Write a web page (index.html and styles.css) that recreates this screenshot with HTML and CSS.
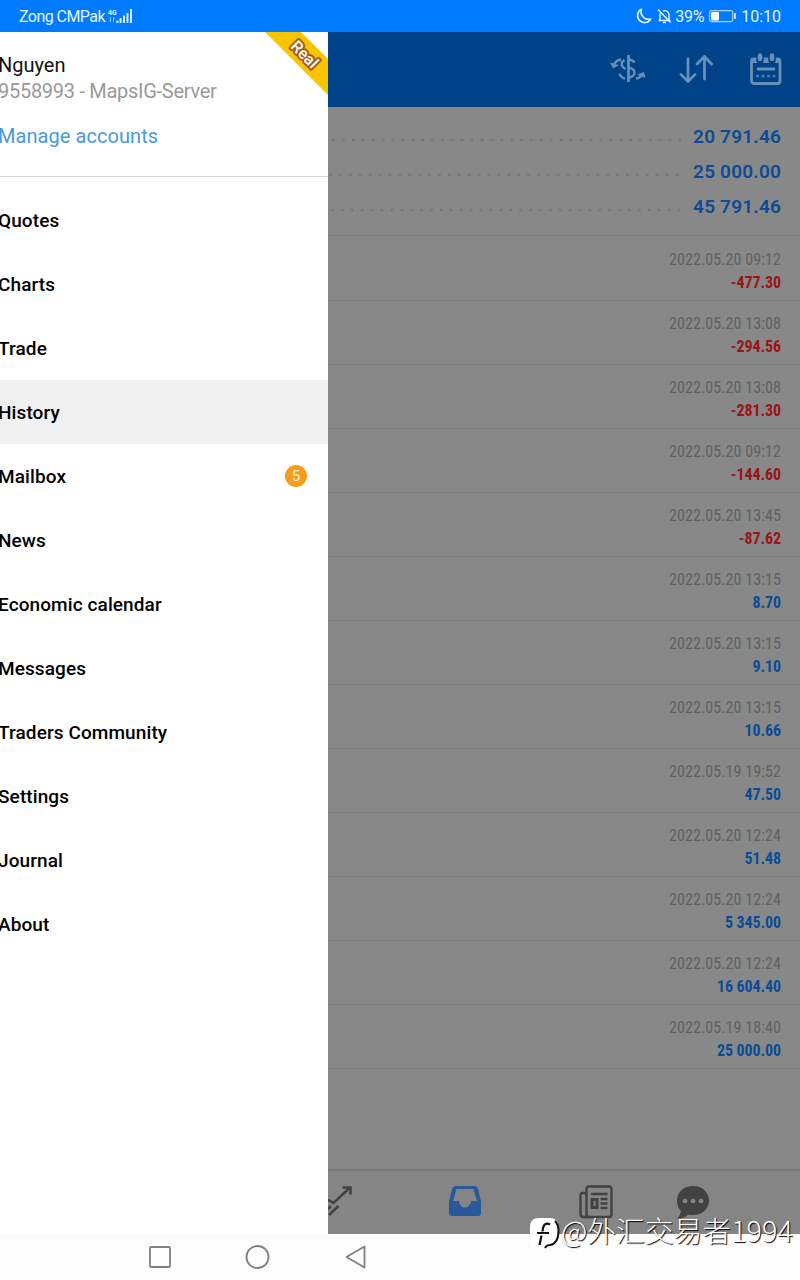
FILE: index.html
```
<!DOCTYPE html>
<html lang="en">
<head>
    <meta charset="UTF-8">
    <meta name="viewport" content="width=device-width, initial-scale=1.0">
    <title>History</title>
    <link rel="stylesheet" href="styles.css">
</head>
<body>
    <div class="status-bar">
        <span class="carrier">Zong CMPak</span>
        <svg class="signal" width="25" height="16" viewBox="0 0 25 16">
            <text x="0" y="6.500" class="network" textLength="8.500" lengthAdjust="spacingAndGlyphs">4G</text>
            <path d="M2.500 9v5M1.500 12.500L2.500 14M5.500 14V9.500M6.600 11L5.500 9.500" fill="none" stroke="#8fc6ff" stroke-width="1"/>
            <path d="M8.300 12.500h2.200v2.500h-2.200zM11.600 10h2v5h-2zM15 7.500h2v7.500h-2zM18.500 5h2v10h-2zM22 1h2v14h-2z" fill="#d9f0ff"/>
        </svg>
        <div class="status-right">
            <svg width="16" height="16" viewBox="0 0 16 16" fill="none" stroke="#e3f6ff" stroke-width="1.600">
                <path d="M5.500 1.300A7 7 0 1 0 14.700 11 7.500 7.500 0 0 1 5.500 1.300z" stroke-linejoin="round"/>
            </svg>
            <svg class="bell" width="15" height="16" viewBox="0 0 15 16" fill="none" stroke="#e3f6ff" stroke-width="1.400">
                <path d="M1.500 12.500h12M3 12V7c0-1 .3-2 1-2.700M6 3c3-1.200 6 .8 6 4v5M6 14.500h3M1 1.500l12.500 13"/>
            </svg>
            <span class="percent">39%</span>
            <svg class="battery" width="27" height="14" viewBox="0 0 27 14">
                <rect x="0.600" y="1.600" width="23" height="11" rx="2" fill="none" stroke="#a9d6ff" stroke-width="1.100"/>
                <rect x="2" y="3" width="8" height="8.500" rx="1" fill="#fff"/>
                <path d="M25.900 4v6" stroke="#e3f6ff" stroke-width="1.600"/>
            </svg>
            <span>10:10</span>
        </div>
    </div>

    <div class="screen">
        <div class="drawer">
            <div class="account">
                <div class="account-name">Nguyen</div>
                <div class="account-server">9558993 - MapsIG-Server</div>
                <div class="account-manage">Manage accounts</div>
                <svg class="ribbon" width="64" height="64" viewBox="0 0 64 64">
                    <path d="M1 0H37L64 27V63z" fill="#f6c400"/>
                    <text x="41" y="28" transform="rotate(45 41 22)" class="ribbon-text">Real</text>
                </svg>
            </div>
            <div class="menu">
                <div class="menu-item">Quotes</div>
                <div class="menu-item">Charts</div>
                <div class="menu-item">Trade</div>
                <div class="menu-item active">History</div>
                <div class="menu-item">Mailbox <span class="badge">5</span></div>
                <div class="menu-item">News</div>
                <div class="menu-item">Economic calendar</div>
                <div class="menu-item">Messages</div>
                <div class="menu-item">Traders Community</div>
                <div class="menu-item">Settings</div>
                <div class="menu-item">Journal</div>
                <div class="menu-item">About</div>
            </div>
        </div>

        <div class="content">
            <div class="toolbar">
                <svg width="36" height="32" viewBox="0 0 36 32" fill="none" stroke="#668fb9" stroke-width="2.400">
                    <path d="M18.500 2v27" stroke-width="2.800"/>
                    <path d="M24.500 9.500c-1.500-2-3.500-2.800-6-3M18.500 14.500c4 .8 6 2.500 6 5s-2 4.500-6 5"/>
                    <path d="M14.500 7c-4 2.500-4 6.500 1 9M9.500 20.500c.8 2.800 2.500 4.500 5.500 5"/>
                    <path d="M11 6.500c-3 .3-5.500 2-7 5M26 25.500c3.500-.3 5.500-2 6.500-5"/>
                    <path d="M0 9.500l3 6 6-3.500zM27 21.500l7-2.500 1.500 6z" fill="#668fb9" stroke="none"/>
                </svg>
                <svg class="sort" width="34" height="30" viewBox="0 0 34 30" fill="none" stroke="#668fb9" stroke-width="2.800" stroke-linecap="round" stroke-linejoin="round">
                    <path d="M9 5v22M2 20.500l7 7 7-7M25.500 25V2.500M18 10l7.500-7.500L32.500 10"/>
                </svg>
                <svg width="32" height="32" viewBox="0 0 32 32">
                    <rect x="1.500" y="6" width="28.500" height="24.500" rx="2.500" fill="none" stroke="#668fb9" stroke-width="2.800"/>
                    <path d="M1 5h29v5H1z" fill="#668fb9"/>
                    <path d="M10 3v4M22 3v4" stroke="#004287" stroke-width="7.500" stroke-linecap="round"/>
                    <path d="M10 2.500v3.500M22 2.500v3.500" stroke="#668fb9" stroke-width="4.600" stroke-linecap="round"/>
                    <path d="M8 16h16" stroke="#668fb9" stroke-width="2.800" stroke-linecap="round"/>
                    <path d="M7.500 23h18" stroke="#427fb8" stroke-width="3.200" stroke-linecap="round" stroke-dasharray="0 5.500"/>
                </svg>
            </div>

            <div class="summary">
                <div class="summary-row"><svg class="dots" width="354" height="4"><path d="M352 2H0" class="dot-line"/></svg><span>20 791.46</span></div>
                <div class="summary-row"><svg class="dots" width="354" height="4"><path d="M349 2H0" class="dot-line"/></svg><span>25 000.00</span></div>
                <div class="summary-row"><svg class="dots" width="354" height="4"><path d="M351 2H0" class="dot-line"/></svg><span>45 791.46</span></div>
            </div>

            <div class="deals" id="deals"></div>

            <div class="tabs">
                <svg class="tab-trade" width="26" height="32" viewBox="0 0 26 32" fill="none" stroke="#424242" stroke-width="2.600">
                    <path d="M0 15l5.500 3L21.500 3M14.500 2.500h8v7M0 24l3-3M1 30l9.500-9"/>
                </svg>
                <svg class="tab-history" width="34" height="32" viewBox="0 0 34 32">
                    <path d="M8 1h18c2 0 3.500 1 4 3l3 12v12c0 2-1 3-3 3H4c-2 0-3-1-3-3V16L4 4c.5-2 2-3 4-3zM8.500 4L5 16h6c.5 4 3 6.500 6 6.500s5.500-2.500 6-6.500h6L25.500 4z" fill="#27599b" fill-rule="evenodd"/>
                </svg>
                <svg class="tab-news" width="34" height="34" viewBox="0 0 34 34" fill="none" stroke="#424242" stroke-width="2.400">
                    <rect x="7.500" y="1.500" width="25" height="30.500" rx="2.500"/>
                    <path d="M7 8H4C2 8 1.500 9 1.500 10.500V29c0 2 1 3 3 3h6M12 9h16.500M21.500 14h7M21.500 18.500h7M21.500 23h7"/>
                    <rect x="13" y="14.500" width="5" height="8" stroke-width="3"/>
                </svg>
                <svg class="tab-chat" width="34" height="34" viewBox="0 0 34 34">
                    <path d="M17 1c9 0 16 6 16 14.500S26 30 17 30c-1.500 0-3 0-4.500-.5C10 32 6 33.500 1 33.500c2-2 3.500-4.500 4-7.500-3-2.500-4-6.500-4-10.500C1 7 8 1 17 1z" fill="#424242"/>
                    <path d="M9 16h.1M17 16h.1M25 16h.1" stroke="#858585" stroke-width="4.600" stroke-linecap="round"/>
                </svg>
            </div>
        </div>
    </div>

    <div class="nav-bar">
        <svg width="24" height="24" viewBox="0 0 24 24"><rect x="2" y="2" width="20" height="20" rx="1" fill="none" stroke="#808080" stroke-width="1.800"/></svg>
        <svg width="26" height="26" viewBox="0 0 26 26"><circle cx="12.500" cy="13" r="11" fill="none" stroke="#808080" stroke-width="1.800"/></svg>
        <svg width="24" height="26" viewBox="0 0 24 26"><path d="M20.500 2.500v21L2.500 13z" fill="none" stroke="#808080" stroke-width="1.800" stroke-linejoin="round"/></svg>
    </div>

    <div class="watermark">
        <svg width="32" height="34" viewBox="0 0 32 34">
            <path d="M9 0h11c5 0 8 3 8 8v8c0 8-4 12-11 12H0V9c0-6 3-9 9-9z" fill="#fff"/>
            <path d="M20 6.500c-5-2.500-7 1-7.500 7M7 15h12M11.500 17.500L9.500 27" fill="none" stroke="#111" stroke-width="2.200"/>
            <path d="M25 3c3 3 3.500 6 3.500 10 0 9-3 13-8.500 14-3 0-4 1-5 3" fill="none" stroke="#111" stroke-width="2"/>
        </svg>
        <span>@外汇交易者1994</span>
    </div>

    <script>
        const deals = [
            ["2022.05.20 09:12", "-477.30"],
            ["2022.05.20 13:08", "-294.56"],
            ["2022.05.20 13:08", "-281.30"],
            ["2022.05.20 09:12", "-144.60"],
            ["2022.05.20 13:45", "-87.62"],
            ["2022.05.20 13:15", "8.70"],
            ["2022.05.20 13:15", "9.10"],
            ["2022.05.20 13:15", "10.66"],
            ["2022.05.19 19:52", "47.50"],
            ["2022.05.20 12:24", "51.48"],
            ["2022.05.20 12:24", "5 345.00"],
            ["2022.05.20 12:24", "16 604.40"],
            ["2022.05.19 18:40", "25 000.00"]
        ];

        const list = document.getElementById("deals");
        deals.forEach(function(deal) {
            const row = document.createElement("div");
            row.className = "deal";
            const time = document.createElement("div");
            time.className = "deal-time";
            time.textContent = deal[0];
            const profit = document.createElement("div");
            profit.className = deal[1].startsWith("-") ? "deal-profit loss" : "deal-profit";
            profit.textContent = deal[1];
            row.append(time, profit);
            list.appendChild(row);
        });
    </script>
</body>
</html>
```
FILE: styles.css
```
* {
    box-sizing: border-box;
}

body {
    font-family: Roboto, sans-serif;
    margin: 0;
    width: 800px;
    height: 1280px;
    overflow: hidden;
    display: flex;
    flex-direction: column;
    position: relative;
}

svg {
    display: block;
    flex-shrink: 0;
}

.status-bar {
    height: 32px;
    background-color: #007aff;
    color: #e3f6ff;
    display: flex;
    align-items: center;
    padding: 0 19px;
    font-size: 16px;
}

.carrier {
    letter-spacing: -0.55px;
}

.signal {
    margin-left: 3px;
}

.network {
    font-size: 8px;
    font-weight: bold;
    fill: #e3f6ff;
}

.status-right {
    margin-left: auto;
    display: flex;
    align-items: center;
}

.bell {
    margin: 0 3px 0 5px;
}

.percent {
    letter-spacing: -0.3px;
}

.battery {
    margin: 0 5px 0 5px;
}

.screen {
    height: 1202px;
    display: flex;
}

.drawer {
    width: 328px;
    background-color: #fff;
}

.account {
    position: relative;
    height: 145px;
    padding-top: 20px;
    border-bottom: 1px solid #d4d4d4;
    font-size: 20px;
    line-height: 26px;
}

.account-name {
    margin-left: -2px;
    color: #111;
}

.account-server {
    margin-left: -2px;
    color: #999;
    letter-spacing: -0.28px;
}

.account-manage {
    margin: 19px 0 0 -2px;
    color: #4a9ad8;
    letter-spacing: 0.06px;
}

.ribbon {
    position: absolute;
    top: 0;
    right: 0;
}

.ribbon-text {
    font-size: 16px;
    font-weight: 500;
    text-anchor: middle;
    fill: #fff;
    stroke: #ad5a14;
    stroke-width: 4px;
    stroke-linejoin: round;
    paint-order: stroke;
}

.menu {
    padding-top: 11px;
}

.menu-item {
    height: 64px;
    padding: 0 21px 0 0;
    text-indent: -2px;
    display: flex;
    align-items: center;
    justify-content: space-between;
    font-size: 19px;
    font-weight: 500;
    letter-spacing: 0.1px;
    color: #000;
}

.menu-item.active {
    background-color: #f0f0f0;
}

.badge {
    width: 22px;
    height: 22px;
    border-radius: 50%;
    background-color: #f99b1c;
    color: #fff3c4;
    font-size: 15px;
    font-weight: 400;
    line-height: 22px;
    text-align: center;
    text-indent: 0;
}

.content {
    width: 472px;
    background-color: #888;
    display: flex;
    flex-direction: column;
}

.toolbar {
    height: 75px;
    background-color: #004287;
    display: flex;
    align-items: center;
    justify-content: flex-end;
    gap: 33px;
    padding: 0 18px 2px 0;
}

.sort {
    margin-right: 4px;
}

.summary {
    height: 129px;
    padding: 12px 19px 0 0;
    border-bottom: 1px solid #7b7b7b;
}

.summary-row {
    height: 35px;
    display: flex;
    align-items: center;
    justify-content: space-between;
    font-size: 19px;
    font-weight: 600;
    letter-spacing: 0.2px;
    color: #0b4c96;
}

.dots {
    margin-top: 6px;
}

.dot-line {
    stroke: #787878;
    stroke-width: 3;
    stroke-linecap: round;
    stroke-dasharray: 0 9.9;
}

.deals {
    flex: 1;
    padding-top: 1px;
}

.deal {
    height: 64px;
    padding: 11px 19px 0 0;
    border-bottom: 1px solid #7b7b7b;
    text-align: right;
    font-family: "Roboto Condensed", Roboto, sans-serif;
    font-stretch: condensed;
    font-size: 16px;
    line-height: 23px;
}

.deal-time {
    color: #606060;
    letter-spacing: 0.08px;
}

.deal-profit {
    font-weight: 700;
    letter-spacing: -0.1px;
    color: #0b4c96;
}

.deal-profit.loss {
    color: #981518;
}

.tabs {
    height: 65px;
    border-top: 2px solid #777;
    background-color: #858585;
    display: flex;
    padding-top: 14px;
}

.tab-history {
    margin-left: 94px;
}

.tab-news {
    margin-left: 97px;
}

.tab-chat {
    margin-left: 63px;
}

.nav-bar {
    height: 46px;
    background-color: #fcfcfc;
    display: flex;
    align-items: center;
    gap: 73px;
    padding-left: 148px;
}

.watermark {
    position: absolute;
    left: 530px;
    top: 1218px;
    display: flex;
    font-family: "Noto Sans CJK SC", sans-serif;
    font-size: 28.8px;
    font-weight: 300;
    line-height: 23px;
    color: #fff;
    text-shadow: 1px 1px 1px #000;
    white-space: nowrap;
}

.watermark span {
    margin-left: -1px;
}
```
